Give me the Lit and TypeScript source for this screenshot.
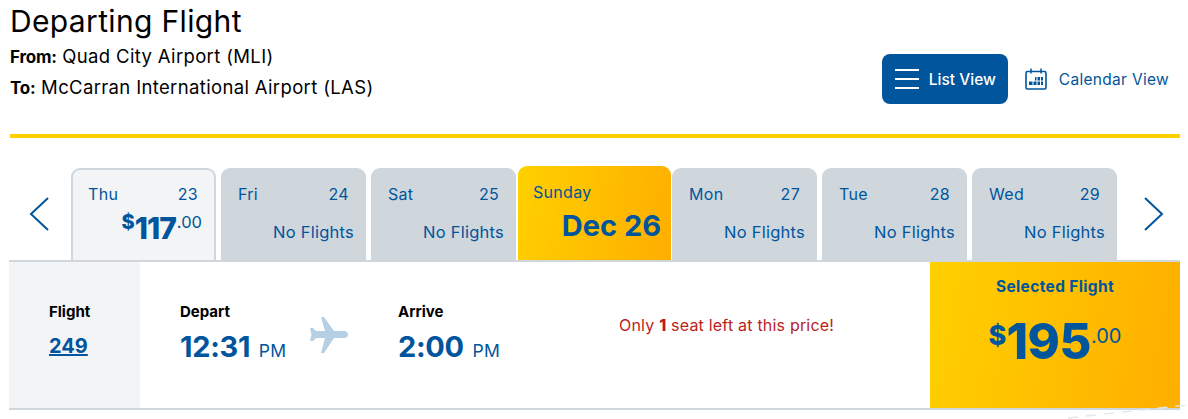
import { LitElement, html, css, svg } from "lit";
import { customElement } from "lit/decorators.js";

const days = [
  { d: "Thu", n: "23", price: true },
  { d: "Fri", n: "24" },
  { d: "Sat", n: "25" },
  { d: "Sunday", n: "Dec 26", sel: true },
  { d: "Mon", n: "27" },
  { d: "Tue", n: "28" },
  { d: "Wed", n: "29" },
];

@customElement("app-root")
export class AppRoot extends LitElement {
  static styles = css`
    :host { display: block; position: relative; width: 1188px; height: 419px; overflow: hidden; background: #fff;
      font-family: Inter, "Open Sans", sans-serif; color: #000; box-sizing: border-box; padding: 0 8px 0 9px; }
    * { box-sizing: border-box; }
    .head { display: flex; justify-content: space-between; align-items: flex-start; height: 138px; margin-left: 1px; border-bottom: 4px solid #ffcf00; }
    h1 { margin: 0; font-size: 30px; line-height: 36px; height: 41px; padding-top: 3px; font-weight: 400; letter-spacing: 0.35px; }
    .route { font-size: 18.5px; line-height: 30px; letter-spacing: 0.35px; }
    .route b { font-weight: 700; font-size: 17px; letter-spacing: -0.2px; }
    .views { display: flex; align-items: center; margin-top: 54px; }
    .list { width: 126px; height: 50px; border-radius: 8px; background: #00559c; color: #fff; display: flex; align-items: center; padding-left: 13px; gap: 10px; font-size: 15.5px; font-weight: 500; }
    .cal { display: flex; align-items: center; margin-left: 17px; margin-right: 11px; gap: 12px; color: #00559c; font-size: 15.5px; letter-spacing: 0.3px; }
    .tabs { display: flex; align-items: flex-end; height: 122px; }
    .arrow { width: 62px; height: 92px; display: flex; align-items: center; color: #00559c; flex: none; padding-left: 20px; }
    .arrow.next { width: 70px; padding-left: 22px; }
    .tab { width: 145px; height: 92px; margin-right: 5px; border-radius: 9px 9px 0 0; background: #cfd7dd; color: #00559c; padding: 16px 16px 0 17px; flex: none; }
    .tab.price { background: #f3f4f6; border: 2px solid #cfd7dd; border-bottom: 0; padding: 14px 15px 0 15px; }
    .tab.sel { width: 153px; height: 94px; margin: 0 1px 0 -3px; background: linear-gradient(100deg, #ffd000, #ffae00); padding: 16px 10px 0 15px; }
    .top { display: flex; justify-content: space-between; font-size: 16px; line-height: 20px; padding-right: 1px; letter-spacing: 0.3px; }
    .none { text-align: right; font-size: 16.5px; line-height: 20px; margin-top: 18px; letter-spacing: 0.25px; margin-right: -4px; }
    .amt { display: flex; justify-content: flex-end; align-items: flex-start; margin-top: 6px; margin-right: -3px; font-weight: 800; }
    .amt .c { font-size: 20px; line-height: 24px; }
    .amt .m { font-size: 30px; line-height: 36px; letter-spacing: -1px; }
    .amt .r { font-size: 16.5px; font-weight: 400; line-height: 24px; margin-left: 1px; }
    .date { text-align: right; font-size: 29px; font-weight: 700; line-height: 36px; margin-top: 6px; }
    .row { display: flex; height: 150px; margin-top: 0; border-top: 2px solid #cfd7dd; border-bottom: 2px solid #cfd7dd; position: relative; }
    .fl { width: 131px; background: #f3f4f6; padding: 40px 0 0 40px; flex: none; }
    .lbl { font-size: 15px; font-weight: 700; line-height: 20px; }
    .fl a { display: block; color: #00559c; font-size: 20px; font-weight: 700; line-height: 26px; margin-top: 11px; text-decoration: underline; text-decoration-thickness: 1.5px; }
    .time { padding-top: 40px; flex: none; }
    .t { color: #00559c; font-size: 29px; font-weight: 700; line-height: 36px; margin-top: 7px; letter-spacing: -0.3px; }
    .t small { font-size: 17.5px; font-weight: 400; letter-spacing: 0.3px; margin-left: 2px; }
    .dep { margin-left: 40px; width: 130px; }
    .plane { width: 38px; margin-top: 55px; flex: none; color: #b5cfe5; height: 40px; }
    .arr { margin-left: 50px; width: 221px; }
    .msg { width: 220px; color: #bb1d1d; font-size: 16px; line-height: 19px; padding-top: 54px; flex: none; letter-spacing: 0.2px; }
    .msg b { font-weight: 800; }
    .price { }
    .selp { width: 250px; margin-left: auto; background: linear-gradient(100deg, #ffd000, #ffae00); color: #00559c; text-align: center; flex: none; }
    .selp .s { font-size: 15.5px; font-weight: 700; line-height: 20px; margin-top: 15px; letter-spacing: 0.35px; }
    .big { display: flex; justify-content: center; margin-top: 15px; font-weight: 800; padding-right: 0; }
    .big .c { font-size: 27px; line-height: 48px; }
    .big .m { font-size: 49px; line-height: 60px; letter-spacing: -0.5px; }
    .big .r { font-size: 20px; font-weight: 400; line-height: 48px; }
    .deco { position: absolute; right: 0; bottom: 0; }
  `;

  render() {
    return html`
      <div class="head">
        <div>
          <h1>Departing Flight</h1>
          <div class="route"><b>From:</b> Quad City Airport (MLI)</div>
          <div class="route"><b>To:</b> McCarran International Airport (LAS)</div>
        </div>
        <div class="views">
          <div class="list">
            <svg width="24" height="20" viewBox="0 0 24 20" fill="none" stroke="currentColor" stroke-width="2"><path d="M0 1h24M0 10h24M0 19h24"/></svg>
            List View
          </div>
          <div class="cal">
            <svg width="22" height="22" viewBox="0 0 22 22" fill="none" stroke="currentColor"><rect x="1" y="3.5" width="20" height="17.5" rx="1.5" stroke-width="1.6"/><path d="M6 0.5v5M16 0.5v5" stroke-width="1.5"/><path fill="currentColor" stroke="none" d="M10 9h8v8H4v-4h6z"/><path stroke="#fff" stroke-width="1" d="M4 13h14M8 12v6M12 8v10M15.500 8v10"/></svg>
            Calendar View
          </div>
        </div>
      </div>
      <div class="tabs">
        <div class="arrow"><svg width="20" height="34" viewBox="0 0 20 34" fill="none" stroke="currentColor" stroke-width="2"><path d="M19 1 2 17l17 16"/></svg></div>
        ${days.map((x) => x.sel ? html`
          <div class="tab sel"><div class="top"><span>${x.d}</span></div><div class="date">${x.n}</div></div>
        ` : html`
          <div class="tab ${x.price ? "price" : ""}">
            <div class="top"><span>${x.d}</span><span>${x.n}</span></div>
            ${x.price
              ? html`<div class="amt"><span class="c">$</span><span class="m">117</span><span class="r">.00</span></div>`
              : html`<div class="none">No Flights</div>`}
          </div>
        `)}
        <div class="arrow next"><svg width="20" height="34" viewBox="0 0 20 34" fill="none" stroke="currentColor" stroke-width="2"><path d="M1 1l17 16L1 33"/></svg></div>
      </div>
      <div class="row">
        <div class="fl"><div class="lbl">Flight</div><a>249</a></div>
        <div class="time dep"><div class="lbl">Depart</div><div class="t">12:31 <small>PM</small></div></div>
        <div class="plane"><svg width="38" height="36" viewBox="0 0 38 36" fill="currentColor"><path d="M11 0h3l10 14h10c2.500 0 4 1.500 4 3.500S36.500 21 34 21H24L14 36h-3l4-15H6l-3 3H0l1.500-6.500L0 11h3l3 3h9z"/></svg></div>
        <div class="time arr"><div class="lbl">Arrive</div><div class="t">2:00 <small>PM</small></div></div>
        <div class="msg">Only <b>1</b> seat left at this price!</div>
        <div class="selp">
          <div class="s">Selected Flight</div>
          <div class="big"><span class="c">$</span><span class="m">195</span><span class="r">.00</span></div>
        </div>
      </div>
      <svg class="deco" width="130" height="14" viewBox="0 0 130 14" fill="none" stroke="#e4e7ea" stroke-width="1.5" stroke-dasharray="10 8"><path d="M10 13 130 0"/></svg>
    `;
  }
}
